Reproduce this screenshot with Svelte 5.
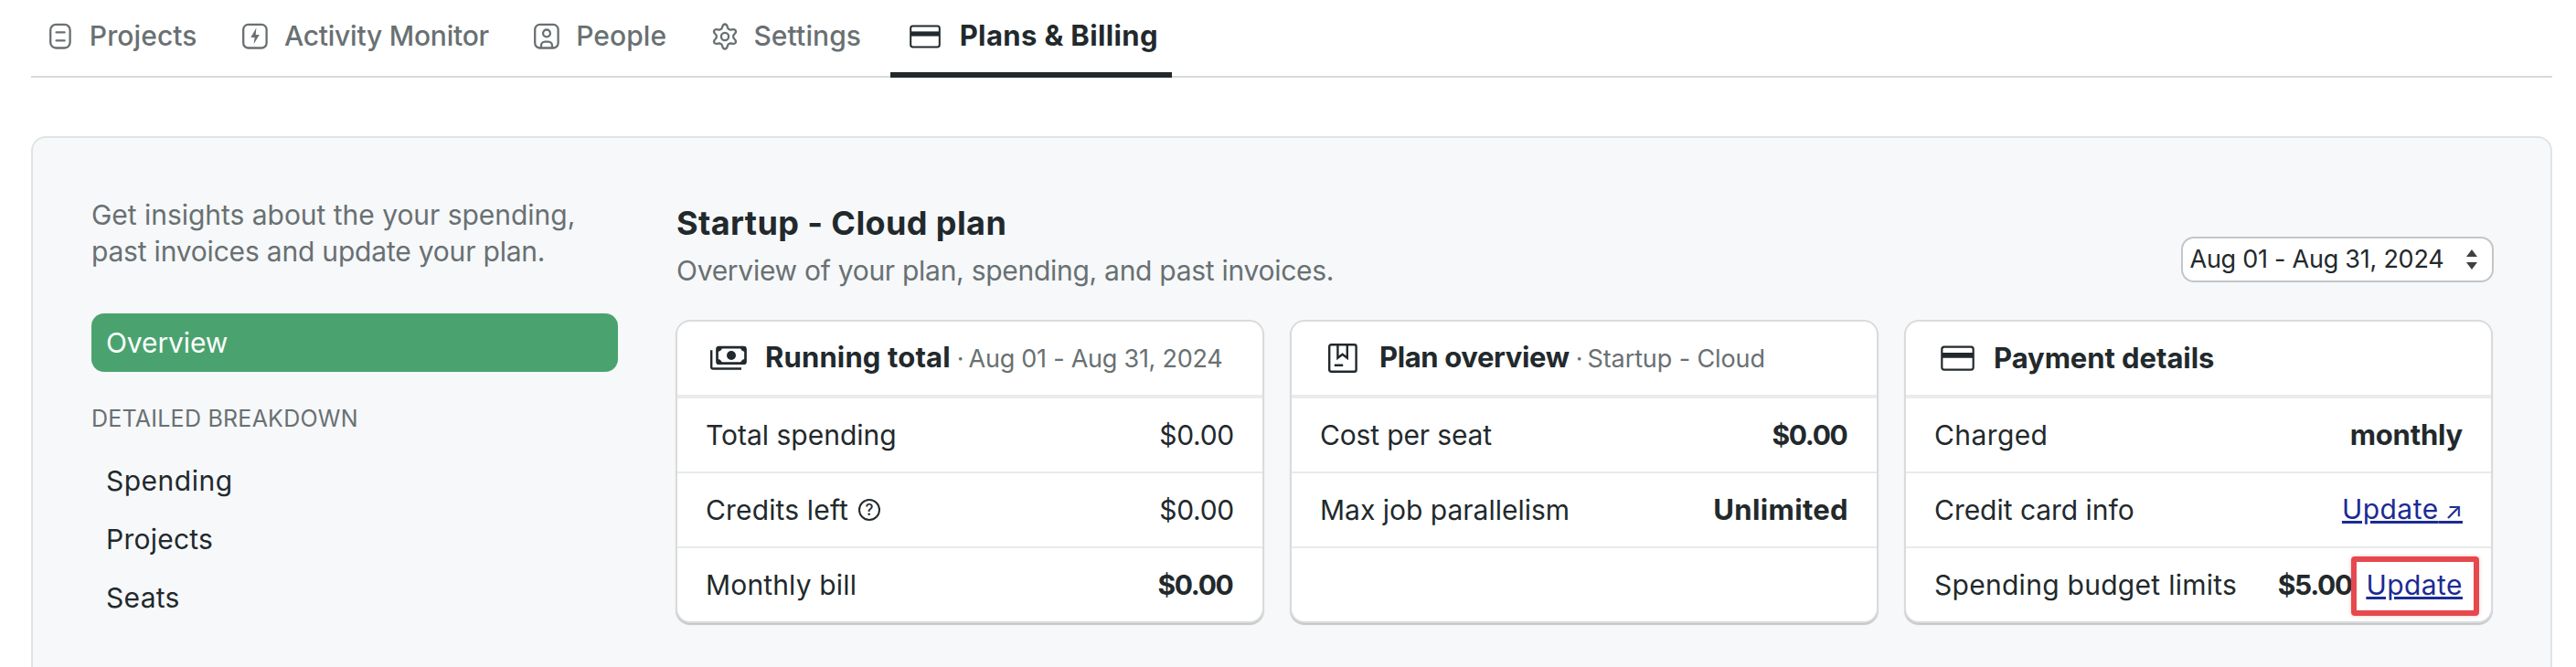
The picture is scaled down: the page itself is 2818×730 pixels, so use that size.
<script>
  const tabs = [
    { label: 'Projects', icon: 'doc', track: 0.1 },
    { label: 'Activity Monitor', icon: 'bolt', track: -0.23 },
    { label: 'People', icon: 'person', track: 0.05 },
    { label: 'Settings', icon: 'gear', track: 0.1 },
    { label: 'Plans & Billing', icon: 'card', track: 0.38, active: true },
  ];

  const links = [
    { label: 'Spending', track: 0.5 },
    { label: 'Projects', track: 0.25 },
    { label: 'Seats', track: 0.3 },
  ];

  const cards = [
    {
      title: 'Running total', icon: 'cash', track: 0.15,
      note: 'Aug 01 - Aug 31, 2024', noteTrack: -0.25,
      rows: [
        { label: 'Total spending', track: 0, value: '$0.00' },
        { label: 'Credits left', track: 0.15, help: true, value: '$0.00' },
        { label: 'Monthly bill', track: 0.15, value: '$0.00', bold: true, money: true },
      ],
    },
    {
      title: 'Plan overview', icon: 'plan', track: -0.37,
      note: 'Startup - Cloud', noteTrack: -0.11,
      rows: [
        { label: 'Cost per seat', track: -0.15, value: '$0.00', bold: true, money: true },
        { label: 'Max job parallelism', track: 0, value: 'Unlimited', bold: true, valueTrack: 0.35 },
        {},
      ],
    },
    {
      title: 'Payment details', icon: 'card', track: -0.06,
      rows: [
        { label: 'Charged', track: 0.4, value: 'monthly', bold: true, valueTrack: -0.2 },
        { label: 'Credit card info', track: -0.03, link: 'Update', external: true },
        { label: 'Spending budget limits', track: 0.28, value: '$5.00', bold: true, money: true, link: 'Update', marked: true },
      ],
    },
  ];

  // Outline of a six-toothed gear, one tooth per 60 degrees.
  function gearPath() {
    const tooth = [[-3.6, -8.6], [-2.4, -9.6], [-3.2, -13.5], [0, -13.5], [3.2, -13.5], [2.4, -9.6], [3.6, -8.6]];
    let d = '';
    for (let k = 0; k < 6; k++) {
      const a = (k * Math.PI) / 3;
      const p = tooth.map(([x, y]) =>
        `${(16 + x * Math.cos(a) - y * Math.sin(a)).toFixed(2)} ${(16 + x * Math.sin(a) + y * Math.cos(a)).toFixed(2)}`);
      d += `${k ? 'L' : 'M'}${p[0]}C${p.slice(1, 4).join(' ')}C${p.slice(4).join(' ')}`;
    }
    return d + 'Z';
  }
  const gear = gearPath();
</script>

{#snippet cardIcon(w, h)}
  <svg width={w} height={h} viewBox="0 0 34 26" fill="none" stroke="currentColor" stroke-width="2">
    <rect x="1.2" y="1.5" width="31.6" height="23" rx="2.4" />
    <path d="M1 7.4h32v5.2H1z" fill="currentColor" stroke="none" />
  </svg>
{/snippet}

<div class="page">
  <nav class="tabs">
    {#each tabs as tab}
      <a class="tab" class:active={tab.active}>
        {#if tab.icon === 'card'}
          {@render cardIcon(34, 26)}
        {:else}
          <svg width="32" height="32" viewBox="0 0 32 32" fill="none" stroke="currentColor" stroke-width="2.3" stroke-linecap="round" stroke-linejoin="round">
            {#if tab.icon === 'doc'}
              <rect x="5.2" y="2.9" width="21.4" height="25.6" rx="6" />
              <path d="M11.6 11.4h9M11.6 20.4h9" />
            {:else if tab.icon === 'bolt'}
              <rect x="3.2" y="2.9" width="25.4" height="25.6" rx="5.4" />
              <path d="M17.4 6.6 11.3 17h4.3l-1 7.2L20.8 14h-4.1z" fill="currentColor" stroke="none" />
            {:else if tab.icon === 'person'}
              <rect x="3.2" y="2.9" width="25.4" height="25.6" rx="5.4" />
              <circle cx="16" cy="12.4" r="3.9" />
              <path d="M10 28v-2.2a4.2 4.2 0 0 1 4.2-4.2h3.6a4.2 4.2 0 0 1 4.2 4.2V28" />
            {:else}
              <path d={gear} />
              <circle cx="16" cy="16" r="4.1" />
            {/if}
          </svg>
        {/if}
        <span style:letter-spacing="{tab.track}px">{tab.label}</span>
      </a>
    {/each}
  </nav>

  <div class="panel">
    <aside>
      <p class="intro">Get insights about the your spending,<br /><span class="tight">past invoices and update your plan.</span></p>
      <a class="item current">Overview</a>
      <h3>DETAILED BREAKDOWN</h3>
      {#each links as l}
        <a class="item" style:letter-spacing="{l.track}px">{l.label}</a>
      {/each}
    </aside>

    <main>
      <header class="head">
        <div>
          <h1>Startup - Cloud plan</h1>
          <p class="sub">Overview of your plan, spending, and past invoices.</p>
        </div>
        <div class="select">
          <span>Aug 01 - Aug 31, 2024</span>
          <svg width="12" height="22" viewBox="0 0 12 22" fill="#3d4143">
            <path d="M6 0l6 8H0zM6 22l6-8H0z" />
          </svg>
        </div>
      </header>

      <div class="cards">
        {#each cards as card}
          <section class="card">
            <div class="card-head">
              <span class="card-icon">
                {#if card.icon === 'card'}
                  {@render cardIcon(37, 28.3)}
                {:else if card.icon === 'cash'}
                  <svg width="40" height="40" viewBox="0 0 40 40" fill="none" stroke="currentColor" stroke-width="2.7">
                    <rect x="7.5" y="8.1" width="31" height="17.6" rx="2" />
                    <circle cx="23" cy="17" r="5" fill="currentColor" stroke="none" />
                    <path d="M8 8h5a5 5 0 0 1-5 5zM38 8h-5a5 5 0 0 0 5 5zM8 26h5a5 5 0 0 0-5-5zM38 26h-5a5 5 0 0 1 5-5z" fill="currentColor" stroke="none" />
                    <path d="M1.2 11.3v18.4q0 1.8 1.8 1.8h31" stroke-width="2.4" />
                  </svg>
                {:else}
                  <svg width="40" height="40" viewBox="0 0 40 40" fill="none" stroke="currentColor" stroke-width="2.4">
                    <rect x="5.2" y="5.2" width="29.4" height="29.6" rx="2" />
                    <path d="M14.4 5v14.8l5.2-4 5.2 4V5M10.8 27.7h9.4" />
                  </svg>
                {/if}
              </span>
              <div class="card-title">
                <strong style:letter-spacing="{card.track}px">{card.title}</strong>
                {#if card.note}
                  <span class="dot">·</span><span class="note" style:letter-spacing="{card.noteTrack}px">{card.note}</span>
                {/if}
              </div>
            </div>
            {#each card.rows as row}
              <div class="row">
                {#if row.label}
                  <div class="label">
                    <span style:letter-spacing="{row.track}px">{row.label}</span>
                    {#if row.help}<span class="help">?</span>{/if}
                  </div>
                  <div class="value">
                    {#if row.value}
                      <span class:bold={row.bold} class:money={row.money} style:letter-spacing={row.valueTrack ? `${row.valueTrack}px` : null}>{row.value}</span>
                    {/if}
                    {#if row.link}
                      <a class="link" class:marked={row.marked}>{row.link}{#if row.external}<span class="ext">&nbsp;↗</span>{/if}</a>
                    {/if}
                  </div>
                {/if}
              </div>
            {/each}
          </section>
        {/each}
      </div>
    </main>
  </div>
</div>

<style>
  :global(body) { background: #fff; overflow: hidden; }
  .page {
    height: 730px;
    overflow: hidden;
    box-sizing: border-box;
    padding: 0 26px 0 34px;
    display: flex;
    flex-direction: column;
    font: 400 30px/40px Inter, "Liberation Sans", sans-serif;
    color: #22292c;
  }
  h1, h3, p { margin: 0; font-weight: 400; }
  svg { display: block; flex: none; }

  .tabs {
    display: flex;
    gap: 47.5px;
    flex: none;
    height: 83px;
    padding-left: 16px;
    border-bottom: 2px solid #d7d9da;
    color: #697072;
    font-weight: 500;
  }
  .tab {
    display: flex;
    align-items: center;
    gap: 15.8px;
    height: 79px;
    white-space: nowrap;
  }
  .tab span { margin-top: -2px; }
  .tab.active {
    gap: 20.5px;
    margin-left: -16px;
    padding: 0 15px 0 21.5px;
    border-bottom: 6px solid #22292c;
    color: #22292c;
    font-size: 31px;
    font-weight: 700;
  }

  .panel {
    flex: none;
    margin-top: 64px;
    height: 660px;
    display: grid;
    grid-template-columns: 576px minmax(0, 1fr);
    column-gap: 63px;
    padding: 64px 62.5px 0 64px;
    border: 2px solid #e1e4e5;
    border-radius: 16px;
    background: #f6f8fa;
  }
  .intro { color: #697072; margin-bottom: 48px; white-space: nowrap; letter-spacing: -0.03px; }
  .intro .tight { letter-spacing: -0.2px; }
  .item {
    display: flex;
    align-items: center;
    height: 64px;
    padding-left: 16px;
  }
  .current {
    background: #4aa36f;
    color: #fff;
    border-radius: 14px;
    letter-spacing: -0.1px;
  }
  h3 {
    margin: 31px 0 16px;
    font-size: 25px;
    letter-spacing: 0.24px;
    color: #697072;
  }

  .head {
    display: flex;
    justify-content: space-between;
    align-items: flex-end;
    margin-bottom: 34px;
    padding-top: 5px;
  }
  h1 {
    margin-bottom: 8px;
    padding-left: 1px;
    font-size: 36px;
    line-height: 48px;
    font-weight: 700;
    letter-spacing: 0.4px;
  }
  .sub { padding-left: 1px; color: #697072; letter-spacing: -0.28px; }
  .select {
    display: flex;
    align-items: center;
    justify-content: space-between;
    box-sizing: border-box;
    width: 342px;
    height: 50px;
    margin-bottom: 7px;
    padding: 0 16px 0 8px;
    border: 2px solid #c3c5c7;
    border-radius: 14px;
    background: #fff;
    font-size: 27px;
    letter-spacing: -0.25px;
  }

  .cards {
    display: grid;
    grid-template-columns: repeat(3, 644px);
    gap: 28px;
  }
  .card {
    box-sizing: border-box;
    border: 2px solid #d9dbdd;
    border-radius: 16px;
    background: #fff;
    box-shadow: 0 2px 1px rgba(0, 0, 0, 0.2);
  }
  .card-head {
    display: flex;
    align-items: center;
    gap: 20px;
    height: 80px;
    padding-left: 36px;
    border-bottom: 4px solid #ebebec;
  }
  .card-icon {
    display: flex;
    align-items: center;
    justify-content: center;
    width: 40px;
    height: 40px;
  }
  .card-title { display: flex; align-items: baseline; white-space: nowrap; }
  .card-title strong { font-size: 31px; font-weight: 700; }
  .dot, .note { font-size: 27px; color: #697072; }
  .dot { margin: 0 5px 0 7px; }
  .row {
    display: flex;
    align-items: center;
    justify-content: space-between;
    height: 80px;
    padding: 0 31px;
    white-space: nowrap;
  }
  .row + .row { border-top: 2px solid #e9eaeb; }
  .label, .value { display: flex; align-items: center; }
  .help {
    width: 20px;
    height: 20px;
    margin-left: 11px;
    border: 2px solid currentColor;
    border-radius: 50%;
    font-size: 17px;
    font-weight: 500;
    line-height: 20px;
    text-align: center;
  }
  .bold { font-size: 31px; font-weight: 700; }
  .money.bold { font-size: 30px; letter-spacing: -1.3px; padding-right: 1.5px; }
  .value { letter-spacing: -0.28px; }
  .link {
    position: relative;
    color: #1b2b94;
    letter-spacing: 0.45px;
    text-decoration: underline;
    text-decoration-thickness: 3px;
    text-underline-offset: 2px;
  }
  .ext { font-size: 25px; letter-spacing: 0; }
  .value .bold + .link { margin-left: 14px; }
  .marked::after {
    content: "";
    position: absolute;
    inset: -11px -18px -14px -16px;
    border: 6px solid #e5484d;
    border-radius: 4px;
    box-shadow: 0 0 4px rgba(229, 72, 77, 0.3);
  }
</style>
